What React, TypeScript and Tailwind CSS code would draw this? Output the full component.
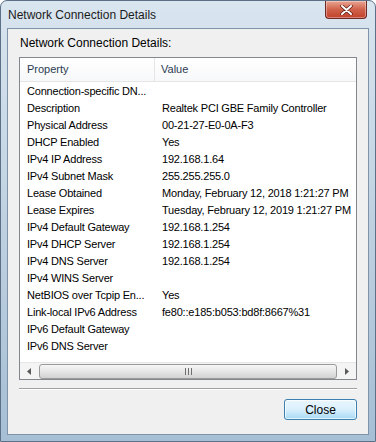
import React from "react";

const ROWS: [string, string][] = [
  ["Connection-specific DN...", ""],
  ["Description", "Realtek PCI GBE Family Controller"],
  ["Physical Address", "00-21-27-E0-0A-F3"],
  ["DHCP Enabled", "Yes"],
  ["IPv4 IP Address", "192.168.1.64"],
  ["IPv4 Subnet Mask", "255.255.255.0"],
  ["Lease Obtained", "Monday, February 12, 2018 1:21:27 PM"],
  ["Lease Expires", "Tuesday, February 12, 2019 1:21:27 PM"],
  ["IPv4 Default Gateway", "192.168.1.254"],
  ["IPv4 DHCP Server", "192.168.1.254"],
  ["IPv4 DNS Server", "192.168.1.254"],
  ["IPv4 WINS Server", ""],
  ["NetBIOS over Tcpip En...", "Yes"],
  ["Link-local IPv6 Address", "fe80::e185:b053:bd8f:8667%31"],
  ["IPv6 Default Gateway", ""],
  ["IPv6 DNS Server", ""],
];

function CloseButton() {
  return (
    <div className="absolute top-0 right-[8px] w-[42px] h-[18px] rounded-b-[4px] border border-t-0 border-[#6d2a22] bg-gradient-to-b from-[#e7a592] via-[#d0614a] to-[#c2412b] flex items-center justify-center shadow-[inset_0_0_0_1px_rgba(255,255,255,0.35)]">
      <svg width="13" height="10" viewBox="0 0 13 10">
        <path d="M2 1 L11 9 M11 1 L2 9" stroke="#5a1a12" strokeWidth="3.4" strokeLinecap="round" />
        <path d="M2 1 L11 9 M11 1 L2 9" stroke="#ffffff" strokeWidth="2" strokeLinecap="round" />
      </svg>
    </div>
  );
}

function ScrollBar() {
  return (
    <div className="h-[17px] shrink-0 flex items-center bg-[#f4f4f4] border-t border-[#e6e6e6]">
      <div className="w-[18px] h-full flex items-center justify-center">
        <svg width="4" height="7" viewBox="0 0 4 7">
          <path d="M4 0 L0 3.5 L4 7 Z" fill="#5a5a5a" />
        </svg>
      </div>
      <div className="flex-1 h-[15px] mx-[1px] rounded-[3px] border border-[#9a9a9a] bg-gradient-to-b from-[#f6f6f6] via-[#e6e6e6] to-[#d2d2d2] flex items-center justify-center">
        <div className="flex gap-[2px]">
          <div className="w-[1px] h-[7px] bg-[#6e6e6e]" />
          <div className="w-[1px] h-[7px] bg-[#6e6e6e]" />
          <div className="w-[1px] h-[7px] bg-[#6e6e6e]" />
        </div>
      </div>
      <div className="w-[18px] h-full flex items-center justify-center">
        <svg width="4" height="7" viewBox="0 0 4 7">
          <path d="M0 0 L4 3.5 L0 7 Z" fill="#5a5a5a" />
        </svg>
      </div>
    </div>
  );
}

export default function App() {
  return (
    <div
      className="w-[376px] h-[442px] flex flex-col rounded-t-[7px] bg-gradient-to-b from-[#d9e5ef] via-[#bfd1e1] to-[#a6bfd4] border border-[#5c7188] text-[11px] text-black overflow-hidden"
      style={{ fontFamily: '"Liberation Sans", Arial, sans-serif' }}
    >
      <div className="relative h-[27px] shrink-0 flex items-center pl-[7px] text-[12px] text-[#1b1b1b]">
        Network Connection Details
        <CloseButton />
      </div>

      <div className="flex flex-1 min-h-0 pl-[6px] pr-[6px] pb-[6px]">
        <div className="flex-1 min-w-0 flex flex-col bg-[#f0f0f0] border border-[#7f93a8] px-[11px]">
          <div className="h-[28px] shrink-0 flex items-end pb-[5px] pl-[1px] text-[12px]">Network Connection Details:</div>

          <div className="h-[323px] shrink-0 flex flex-col bg-white border border-[#828790] overflow-hidden">
            <div className="h-[24px] shrink-0 flex border-b border-[#e5e5e5] bg-gradient-to-b from-white to-[#f7f8f9] text-[#2b3b52]">
              <div className="w-[135px] pl-[7px] flex items-center border-r border-[#e5e5e5]">Property</div>
              <div className="flex-1 pl-[6px] flex items-center">Value</div>
            </div>
            <div className="flex-1 min-h-0 overflow-hidden pt-[1px] tracking-[-0.2px]">
              {ROWS.map(([k, v]) => (
                <div key={k} className="h-[17px] flex items-center whitespace-nowrap">
                  <div className="w-[135px] shrink-0 pl-[7px] overflow-hidden">{k}</div>
                  <div className="pl-[7px]">{v}</div>
                </div>
              ))}
            </div>
            <ScrollBar />
          </div>

          <div className="mt-[8px] border-t border-[#a0a0a0] border-b-white border-b h-0" />

          <div className="flex justify-end mt-[9px]">
            <div className="w-[73px] h-[21px] rounded-[3px] border border-[#3c7fb1] bg-gradient-to-b from-[#eaf6fd] via-[#d9f0fc] to-[#a7d9f5] shadow-[inset_0_0_0_1px_rgba(255,255,255,0.7)] flex items-center justify-center text-[12px]">
              Close
            </div>
          </div>
        </div>
      </div>
    </div>
  );
}
